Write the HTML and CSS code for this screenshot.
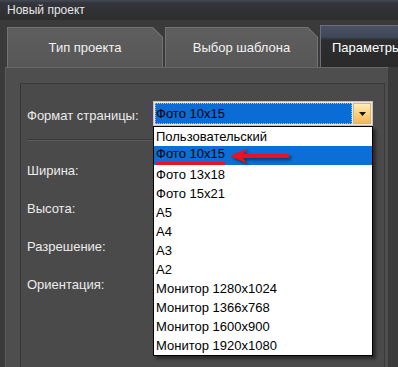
FILE: index.html
```html
<!DOCTYPE html>
<html>
<head>
    <title>Новый проект</title>
    <link rel="stylesheet" href="styles.css">
</head>
<body>
    <div class="window">
        <div class="titlebar">Новый проект</div>

        <div class="tabs">
            <div class="tab"><span class="tab-face">Тип проекта</span></div>
            <div class="tab tab-narrow"><span class="tab-face">Выбор шаблона</span></div>
            <div class="tab tab-active"><span class="tab-face">Параметры страницы</span></div>
        </div>

        <div class="frame">
            <div class="content">
                <div class="row row-format">
                    <span class="label">Формат страницы:</span>
                    <div class="combo">
                        <div class="combo-field">
                            <span class="combo-value">Фото 10x15</span>
                            <span class="combo-btn">
                                <svg width="7" height="4" viewBox="0 0 7 4"><path d="M0 0H7L3.5 4Z" fill="#111"/></svg>
                            </span>
                        </div>
                        <ul class="combo-list">
                            <li>Пользовательский</li>
                            <li class="selected"><span class="marked">Фото 10x15</span></li>
                            <li>Фото 13x18</li>
                            <li>Фото 15x21</li>
                            <li>A5</li>
                            <li>A4</li>
                            <li>A3</li>
                            <li>A2</li>
                            <li>Монитор 1280x1024</li>
                            <li>Монитор 1366x768</li>
                            <li>Монитор 1600x900</li>
                            <li>Монитор 1920x1080</li>
                        </ul>
                        <!-- annotation arrow -->
                        <svg class="pointer" width="60" height="16" viewBox="0 0 60 16">
                            <path d="M0 8 L17 0.5 L13 6 L59 6 L59 10 L13 10 L17 15.5 Z" fill="#ec1020"/>
                        </svg>
                    </div>
                </div>
                <div class="divider"></div>
                <div class="row"><span class="label">Ширина:</span></div>
                <div class="row"><span class="label">Высота:</span></div>
                <div class="row"><span class="label">Разрешение:</span></div>
                <div class="row"><span class="label">Ориентация:</span></div>
            </div>
        </div>
    </div>
</body>
</html>
```

FILE: styles.css
```css
body {
    margin: 0;
    background-color: #3b3b3b;
    font-family: "Liberation Sans", Arial, sans-serif;
    overflow: hidden;
}

.window {
    width: 398px;
    height: 367px;
    overflow: hidden;
    display: flex;
    flex-direction: column;
}

.titlebar {
    height: 20px;
    line-height: 20px;
    padding-left: 7px;
    font-size: 12px;
    color: #e6e6e6;
    background: linear-gradient(#444955 0, #33353c 3px, #2e2e2e 100%);
}

/* tabs */
.tabs {
    display: flex;
    align-items: flex-end;
    gap: 2px;
    height: 47px;
    padding-left: 7px;
    background-color: #3a3a3a;
    overflow: hidden;
    flex-shrink: 0;
}

.tab {
    width: 156px;
    height: 40px;
    flex-shrink: 0;
    box-sizing: border-box;
    padding: 1px 1px 0 1px;
    background-color: #727272;
    clip-path: polygon(0 0, calc(100% - 10px) 0, 100% 10px, 100% 100%, 0 100%);
}

.tab-narrow {
    width: 153px;
}

.tab-face {
    display: flex;
    justify-content: center;
    align-items: center;
    height: 100%;
    font-size: 13px;
    color: #f2f2f2;
    background: linear-gradient(#5e5e5e, #575757);
    clip-path: polygon(0 0, calc(100% - 9.6px) 0, 100% 9.6px, 100% 100%, 0 100%);
    white-space: nowrap;
}

.tab-active {
    width: 155px;
    height: 42px;
    clip-path: none;
    background-color: #6a6f7c;
}

.tab-active .tab-face {
    clip-path: none;
    color: #ffffff;
    padding-top: 1px;
    box-sizing: border-box;
    background: linear-gradient(#4a5163 0, #41475a 11px, #2d2d2d 14px, #2a2a2a 100%);
}

/* frame and page content */
.frame {
    flex: 1;
    margin-left: 5px;
    margin-right: 9px;
    padding: 15px 3px 0 14px;
    background-color: #4e4e4e;
    border-top: 1px solid #676767;
    border-left: 1px solid #5d5d5d;
    border-right: 1px solid #3a3a3a;
}

.content {
    height: 100%;
    box-sizing: border-box;
    padding: 17px 0 0 6px;
    background-color: #4a4a4a;
    border-top: 1px solid #3a3a3a;
    border-left: 1px solid #353535;
    border-right: 1px solid #3a3a3a;
}

.row {
    display: flex;
    align-items: center;
    height: 38px;
}

.row-format {
    height: 25px;
}

.label {
    width: 126px;
    flex-shrink: 0;
    font-size: 13px;
    color: #ececec;
}

.row-format .label {
    padding-top: 3px;
}

.divider {
    width: 126px;
    margin: 13px 0 10px;
    border-top: 1px solid #393939;
    border-bottom: 1px solid #5b5b5b;
}

/* combo box */
.combo {
    position: relative;
    width: 220px;
    height: 25px;
}

.combo-field {
    display: flex;
    gap: 1px;
    height: 25px;
    box-sizing: border-box;
    padding: 1px;
    background-color: #ebe8e2;
    border: 1px solid #c6c2ba;
}

.combo-value {
    flex: 1;
    padding-left: 1px;
    line-height: 21px;
    font-size: 13px;
    color: #000;
    background-color: #0c6cd6;
    outline: 1px dotted #f2b04a;
    outline-offset: -1px;
}

.combo-btn {
    width: 18px;
    display: flex;
    justify-content: center;
    align-items: center;
    padding-top: 1px;
    box-sizing: border-box;
    background: linear-gradient(#feedb8, #f8cc74 60%, #f4b85a);
    border: 1px solid #d9b47a;
}

.combo-list {
    position: absolute;
    top: 25px;
    left: 0;
    width: 220px;
    box-sizing: border-box;
    margin: 0;
    padding: 0;
    list-style: none;
    background-color: #ffffff;
    border: 1px solid #000;
    box-shadow: 3px 3px 3px rgba(0, 0, 0, 0.45);
    z-index: 2;
}

.combo-list li {
    height: 19px;
    line-height: 19px;
    padding-left: 2px;
    font-size: 13px;
    color: #000;
}

.combo-list .selected {
    background-color: #0b6fd7;
}

.marked {
    display: inline-block;
    vertical-align: top;
    line-height: 16px;
    border-bottom: 3px solid #ec1020;
}

.pointer {
    position: absolute;
    left: 77px;
    top: 47px;
    z-index: 3;
    filter: drop-shadow(2px 2px 1.5px rgba(0, 0, 0, 0.5));
}
```
